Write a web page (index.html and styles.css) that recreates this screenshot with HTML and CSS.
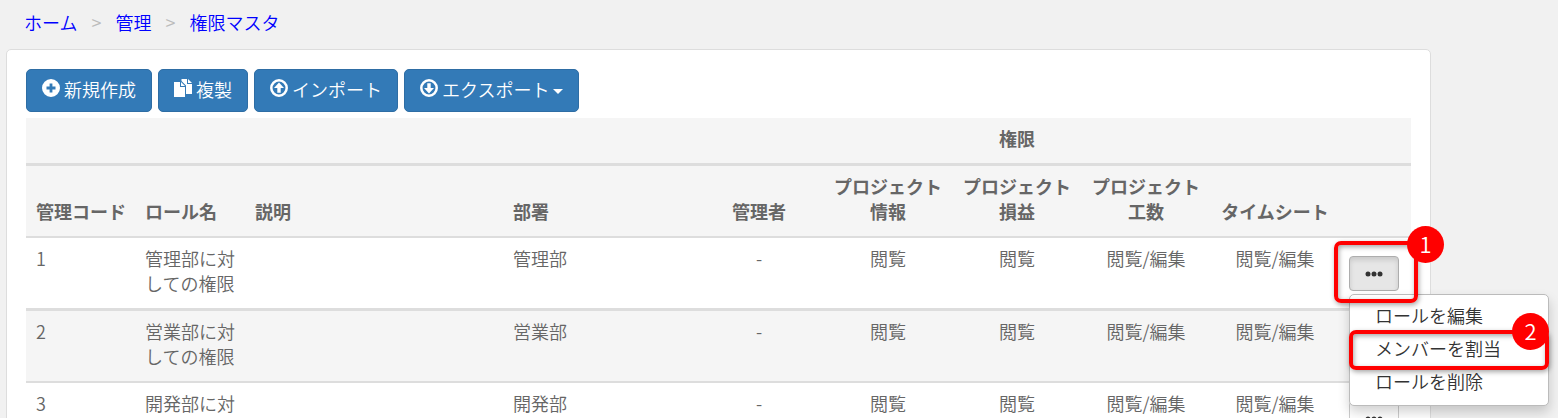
FILE: index.html
```
<!DOCTYPE html>
<html lang="ja">
<head>
  <meta charset="UTF-8">
  <meta name="viewport" content="width=device-width, initial-scale=1.0">
  <title>権限マスタ</title>
  <link rel="stylesheet" href="styles.css">
</head>
<body>
  <nav class="breadcrumb">
    <a href="#">ホーム</a>
    <span class="separator">&gt;</span>
    <a href="#">管理</a>
    <span class="separator">&gt;</span>
    <a href="#">権限マスタ</a>
  </nav>

  <main class="panel">
    <div class="toolbar">
      <button type="button" class="btn-primary">
        <svg class="icon" viewBox="0 0 18 18"><path fill="currentColor" fill-rule="evenodd" d="M9 0a9 9 0 1 0 0 18A9 9 0 0 0 9 0zM7.600 4.500h2.800v3.100h3.100v2.800h-3.100v3.100H7.600v-3.100H4.500V7.600h3.100z"/></svg>
        新規作成
      </button>
      <button type="button" class="btn-primary">
        <svg class="icon" viewBox="0 0 18 18"><path fill="currentColor" d="M0 3h6v5h5v10H0zM7 3l4 4H7zM7.500 0H13v5h5v10h-6V6.500L7.500 2zM14 0l4 4h-4z"/></svg>
        複製
      </button>
      <button type="button" class="btn-primary">
        <svg class="icon" viewBox="0 0 18 18"><circle cx="9" cy="9" r="7.700" fill="none" stroke="currentColor" stroke-width="2.500"/><path fill="currentColor" d="M9 3.600l5 5.400h-3.300v4.800H7.300V9H4z"/></svg>
        インポート
      </button>
      <button type="button" class="btn-primary">
        <svg class="icon" viewBox="0 0 18 18"><circle cx="9" cy="9" r="7.700" fill="none" stroke="currentColor" stroke-width="2.500"/><path fill="currentColor" d="M9 14.400L4 9h3.300V4.200h3.400V9H14z"/></svg>
        エクスポート
        <span class="caret"></span>
      </button>
    </div>

    <table class="role-table">
      <colgroup>
        <col class="col-code">
        <col class="col-name">
        <col>
        <col class="col-dept">
        <col class="col-auth" span="5">
        <col class="col-action">
      </colgroup>
      <thead>
        <tr class="group">
          <td colspan="5"></td>
          <th colspan="3" class="center" scope="colgroup">権限</th>
          <td colspan="2"></td>
        </tr>
        <tr>
          <th scope="col">管理コード</th>
          <th scope="col">ロール名</th>
          <th scope="col">説明</th>
          <th scope="col">部署</th>
          <th scope="col" class="center">管理者</th>
          <th scope="col" class="center">プロジェクト<br>情報</th>
          <th scope="col" class="center">プロジェクト<br>損益</th>
          <th scope="col" class="center">プロジェクト<br>工数</th>
          <th scope="col" class="center">タイムシート</th>
          <td></td>
        </tr>
      </thead>
      <tbody>
        <tr>
          <td>1</td>
          <td>管理部に対しての権限</td>
          <td></td>
          <td>管理部</td>
          <td class="center">-</td>
          <td class="center">閲覧</td>
          <td class="center">閲覧</td>
          <td class="center">閲覧/編集</td>
          <td class="center">閲覧/編集</td>
          <td>
            <div class="dropdown">
              <button type="button" class="btn-more active" aria-label="操作" aria-expanded="true">
                <svg class="dots" viewBox="0 0 18 6"><circle cx="3" cy="3" r="2.500"/><circle cx="9" cy="3" r="2.500"/><circle cx="15" cy="3" r="2.500"/></svg>
              </button>
              <ul class="menu">
                <li><a href="#">ロールを編集</a></li>
                <li>
                  <a href="#">メンバーを割当</a>
                  <div class="callout callout-item"><span class="badge">2</span></div>
                </li>
                <li><a href="#">ロールを削除</a></li>
              </ul>
              <div class="callout callout-button"><span class="badge">1</span></div>
            </div>
          </td>
        </tr>
        <tr>
          <td>2</td>
          <td>営業部に対しての権限</td>
          <td></td>
          <td>営業部</td>
          <td class="center">-</td>
          <td class="center">閲覧</td>
          <td class="center">閲覧</td>
          <td class="center">閲覧/編集</td>
          <td class="center">閲覧/編集</td>
          <td>
            <div class="dropdown">
              <button type="button" class="btn-more" aria-label="操作">
                <svg class="dots" viewBox="0 0 18 6"><circle cx="3" cy="3" r="2.500"/><circle cx="9" cy="3" r="2.500"/><circle cx="15" cy="3" r="2.500"/></svg>
              </button>
            </div>
          </td>
        </tr>
        <tr>
          <td>3</td>
          <td>開発部に対</td>
          <td></td>
          <td>開発部</td>
          <td class="center">-</td>
          <td class="center">閲覧</td>
          <td class="center">閲覧</td>
          <td class="center">閲覧/編集</td>
          <td class="center">閲覧/編集</td>
          <td>
            <div class="dropdown">
              <button type="button" class="btn-more" aria-label="操作">
                <svg class="dots" viewBox="0 0 18 6"><circle cx="3" cy="3" r="2.500"/><circle cx="9" cy="3" r="2.500"/><circle cx="15" cy="3" r="2.500"/></svg>
              </button>
            </div>
          </td>
        </tr>
      </tbody>
    </table>
  </main>
</body>
</html>
```
FILE: styles.css
```
* {
  box-sizing: border-box;
}
body {
  margin: 0;
  height: 100vh;
  overflow: hidden;
  background-color: #f1f1f1;
  color: #666666;
  font-family: "Noto Sans CJK JP", sans-serif;
  font-size: 18px;
  font-weight: 350;
  line-height: 25px;
}

/* パンくずリスト */
.breadcrumb {
  display: flex;
  gap: 12px;
  padding: 10px 24px 14px;
}
.breadcrumb a {
  color: #0000ff;
  text-decoration: none;
}
.separator {
  width: 14px;
  text-align: center;
  color: #bbbbbb;
}

.panel {
  margin: 0 127px 20px 6px;
  padding: 19px;
  background-color: #ffffff;
  border: 1px solid #dddddd;
  border-radius: 5px;
}

/* ツールバー */
.toolbar {
  display: flex;
  gap: 6px;
  margin-bottom: 6px;
}
.btn-primary {
  display: flex;
  align-items: center;
  gap: 4px;
  padding: 7px 15px 9px;
  font: inherit;
  color: #ffffff;
  background-color: #337ab7;
  border: 1px solid #2e6da4;
  border-radius: 5px;
  cursor: pointer;
}
.btn-primary:hover {
  background-color: #286090;
}
.icon {
  width: 18px;
  height: 18px;
  margin-bottom: 3px;
}
.caret {
  border-top: 5px solid #ffffff;
  border-left: 5px solid transparent;
  border-right: 5px solid transparent;
  margin-top: 3px;
}

/* 権限一覧 */
.role-table {
  width: 100%;
  table-layout: fixed;
  border-collapse: separate;
  border-spacing: 0;
}
.col-code {
  width: 109px;
}
.col-name {
  width: 110px;
}
.col-dept {
  width: 191px;
}
.col-auth {
  width: 129px;
}
.col-action {
  width: 72px;
}
.role-table th,
.role-table td {
  height: 72px;
  padding: 8px 9px 12px 10px;
  text-align: left;
  vertical-align: top;
  border-bottom: 2px solid #dddddd;
}
.role-table thead th {
  vertical-align: bottom;
}
.role-table thead tr,
.role-table tbody tr:nth-child(even) {
  background-color: #f5f5f5;
}
.role-table .group th,
.role-table .group td {
  height: 48px;
  border-bottom-width: 3px;
}
.role-table tbody tr:nth-child(odd) td {
  height: 73px;
  border-bottom-width: 3px;
}
.role-table .center {
  padding-right: 9px;
  text-align: center;
}

/* 行メニュー */
.dropdown {
  position: relative;
  width: 50px;
  margin-top: 10px;
}
.btn-more {
  display: flex;
  justify-content: center;
  align-items: center;
  width: 50px;
  height: 35px;
  padding: 0;
  color: #333333;
  background-color: #ffffff;
  border: 1px solid #cccccc;
  border-radius: 4px;
  cursor: pointer;
}
.btn-more.active {
  background-color: #e6e6e6;
  border-color: #adadad;
  box-shadow: inset 0 3px 5px rgba(0, 0, 0, 0.125);
}
.dots {
  width: 18px;
  height: 6px;
  fill: currentColor;
}
.menu {
  position: absolute;
  top: 38px;
  left: 0;
  z-index: 10;
  width: 200px;
  margin: 0;
  padding: 5px 0 6px;
  list-style: none;
  background-color: #ffffff;
  border: 1px solid #bbbbbb;
  border-radius: 5px;
  box-shadow: 0 6px 12px rgba(0, 0, 0, 0.18);
}
.menu li {
  position: relative;
}
.menu a {
  display: block;
  padding: 3px 25px 5px;
  color: #333333;
  text-decoration: none;
}

/* 手順の強調枠 */
.callout {
  position: absolute;
  z-index: 20;
  border: 4px solid #ff0000;
  border-radius: 7px;
  box-shadow: 1px 2px 5px rgba(0, 0, 0, 0.35), inset 1px 2px 5px rgba(0, 0, 0, 0.35);
  pointer-events: none;
}
.callout-button {
  top: -15px;
  left: -15px;
  width: 84px;
  height: 62px;
}
.callout-item {
  top: -3px;
  right: -1px;
  bottom: -4px;
  left: -1px;
}
.badge {
  position: absolute;
  top: -19px;
  right: -30px;
  width: 37px;
  height: 37px;
  border-radius: 50%;
  background-color: #ff0000;
  color: #ffffff;
  font-size: 22px;
  line-height: 34px;
  text-align: center;
}
.callout-item .badge {
  top: -21px;
  right: -4px;
}
```
